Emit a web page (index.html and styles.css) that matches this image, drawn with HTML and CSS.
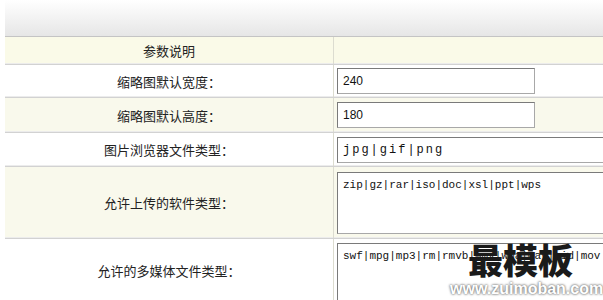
FILE: index.html
```html
<!DOCTYPE html>
<html lang="zh-CN">
<head>
    <meta charset="UTF-8">
    <title>参数设置</title>
    <link rel="stylesheet" href="styles.css">
</head>
<body>
    <div class="page">
        <div class="top-bar"></div>
        <table class="settings">
            <tr class="row-head">
                <td class="label">参数说明</td>
                <td class="value"></td>
            </tr>
            <tr class="row-a">
                <td class="label">缩略图默认宽度：</td>
                <td class="value"><input type="text" class="short" value="240"></td>
            </tr>
            <tr class="row-b">
                <td class="label">缩略图默认高度：</td>
                <td class="value"><input type="text" class="short" value="180"></td>
            </tr>
            <tr class="row-c">
                <td class="label">图片浏览器文件类型：</td>
                <td class="value"><input type="text" class="long mono" value="jpg|gif|png"></td>
            </tr>
            <tr class="row-d">
                <td class="label">允许上传的软件类型：</td>
                <td class="value"><textarea>zip|gz|rar|iso|doc|xsl|ppt|wps</textarea></td>
            </tr>
            <tr class="row-e">
                <td class="label">允许的多媒体文件类型：</td>
                <td class="value"><textarea>swf|mpg|mp3|rm|rmvb|wmv|wma|wav|mid|mov</textarea></td>
            </tr>
        </table>
        <div class="watermark">
            <div class="mark-cn">最模板</div>
            <div class="mark-url">www.zuimoban.com</div>
        </div>
    </div>
</body>
</html>
```

FILE: styles.css
```css
body {
    margin: 0;
    padding: 0;
    background: #fff;
    font-family: "Noto Sans CJK SC", "Liberation Sans", sans-serif;
    color: #222;
    overflow: hidden;
}

.page {
    position: relative;
    width: 603px;
    height: 300px;
    overflow: hidden;
}

.top-bar {
    height: 36px;
    margin-left: 5px;
    background: linear-gradient(#ffffff, #e6e6e6);
    border-bottom: 1px solid #c4c4c4;
}

.settings {
    margin-left: 5px;
    width: 680px;
    border-collapse: collapse;
    table-layout: fixed;
}

.settings td {
    padding: 0;
    border-bottom: 1px solid #d2d2d2;
    box-shadow: inset 0 -1px 0 #ececec;
}

.settings .label {
    width: 328px;
    text-align: center;
    font-size: 13px;
    border-right: 1px solid #dcdcd0;
}

.settings .value {
    padding-left: 3px;
}

.row-head td { height: 27px; background: #fafae8; }
.row-a td { height: 32px; background: #fff; }
.row-b td { height: 34px; background: #f9f9ec; }
.row-c td { height: 33px; background: #fff; }
.row-d td { height: 71px; background: #f9f9ec; }
.row-e td { height: 80px; background: #fff; }

.row-e td {
    vertical-align: top;
}

.row-e .label {
    padding-top: 22px;
}

input,
textarea {
    box-sizing: border-box;
    margin: 0;
    border: 1px solid #a8a8a8;
    border-top-color: #7a7a7a;
    border-left-color: #7a7a7a;
    background: #fff;
    color: #111;
    outline: none;
    display: block;
}

input.short {
    width: 198px;
    height: 26px;
    padding: 0 5px;
    font-family: "Liberation Sans", Arial, sans-serif;
    font-size: 12px;
}

input.long {
    width: 280px;
    height: 26px;
    padding: 0 5px;
}

.mono {
    font-family: "Liberation Mono", monospace;
    font-size: 12px;
    letter-spacing: 2px;
}

textarea {
    width: 280px;
    height: 62px;
    padding: 5px 5px;
    resize: none;
    font-family: "Liberation Mono", monospace;
    font-size: 11px;
    line-height: 14px;
}

.row-e textarea {
    margin-top: 4px;
    height: 70px;
}

.watermark {
    position: absolute;
    left: 450px;
    top: 237px;
    width: 150px;
    text-align: center;
}

.mark-cn {
    font-family: "Noto Sans CJK SC", sans-serif;
    font-weight: 900;
    font-size: 35px;
    line-height: 44px;
    color: #1a1a1a;
    margin-left: 18px;
    text-align: left;
}

.mark-url {
    font-family: "Liberation Sans", Arial, sans-serif;
    font-weight: bold;
    font-size: 16px;
    line-height: 16px;
    color: #fff;
    text-shadow: 0 0 2px #666, 0 0 3px #888;
}
```
